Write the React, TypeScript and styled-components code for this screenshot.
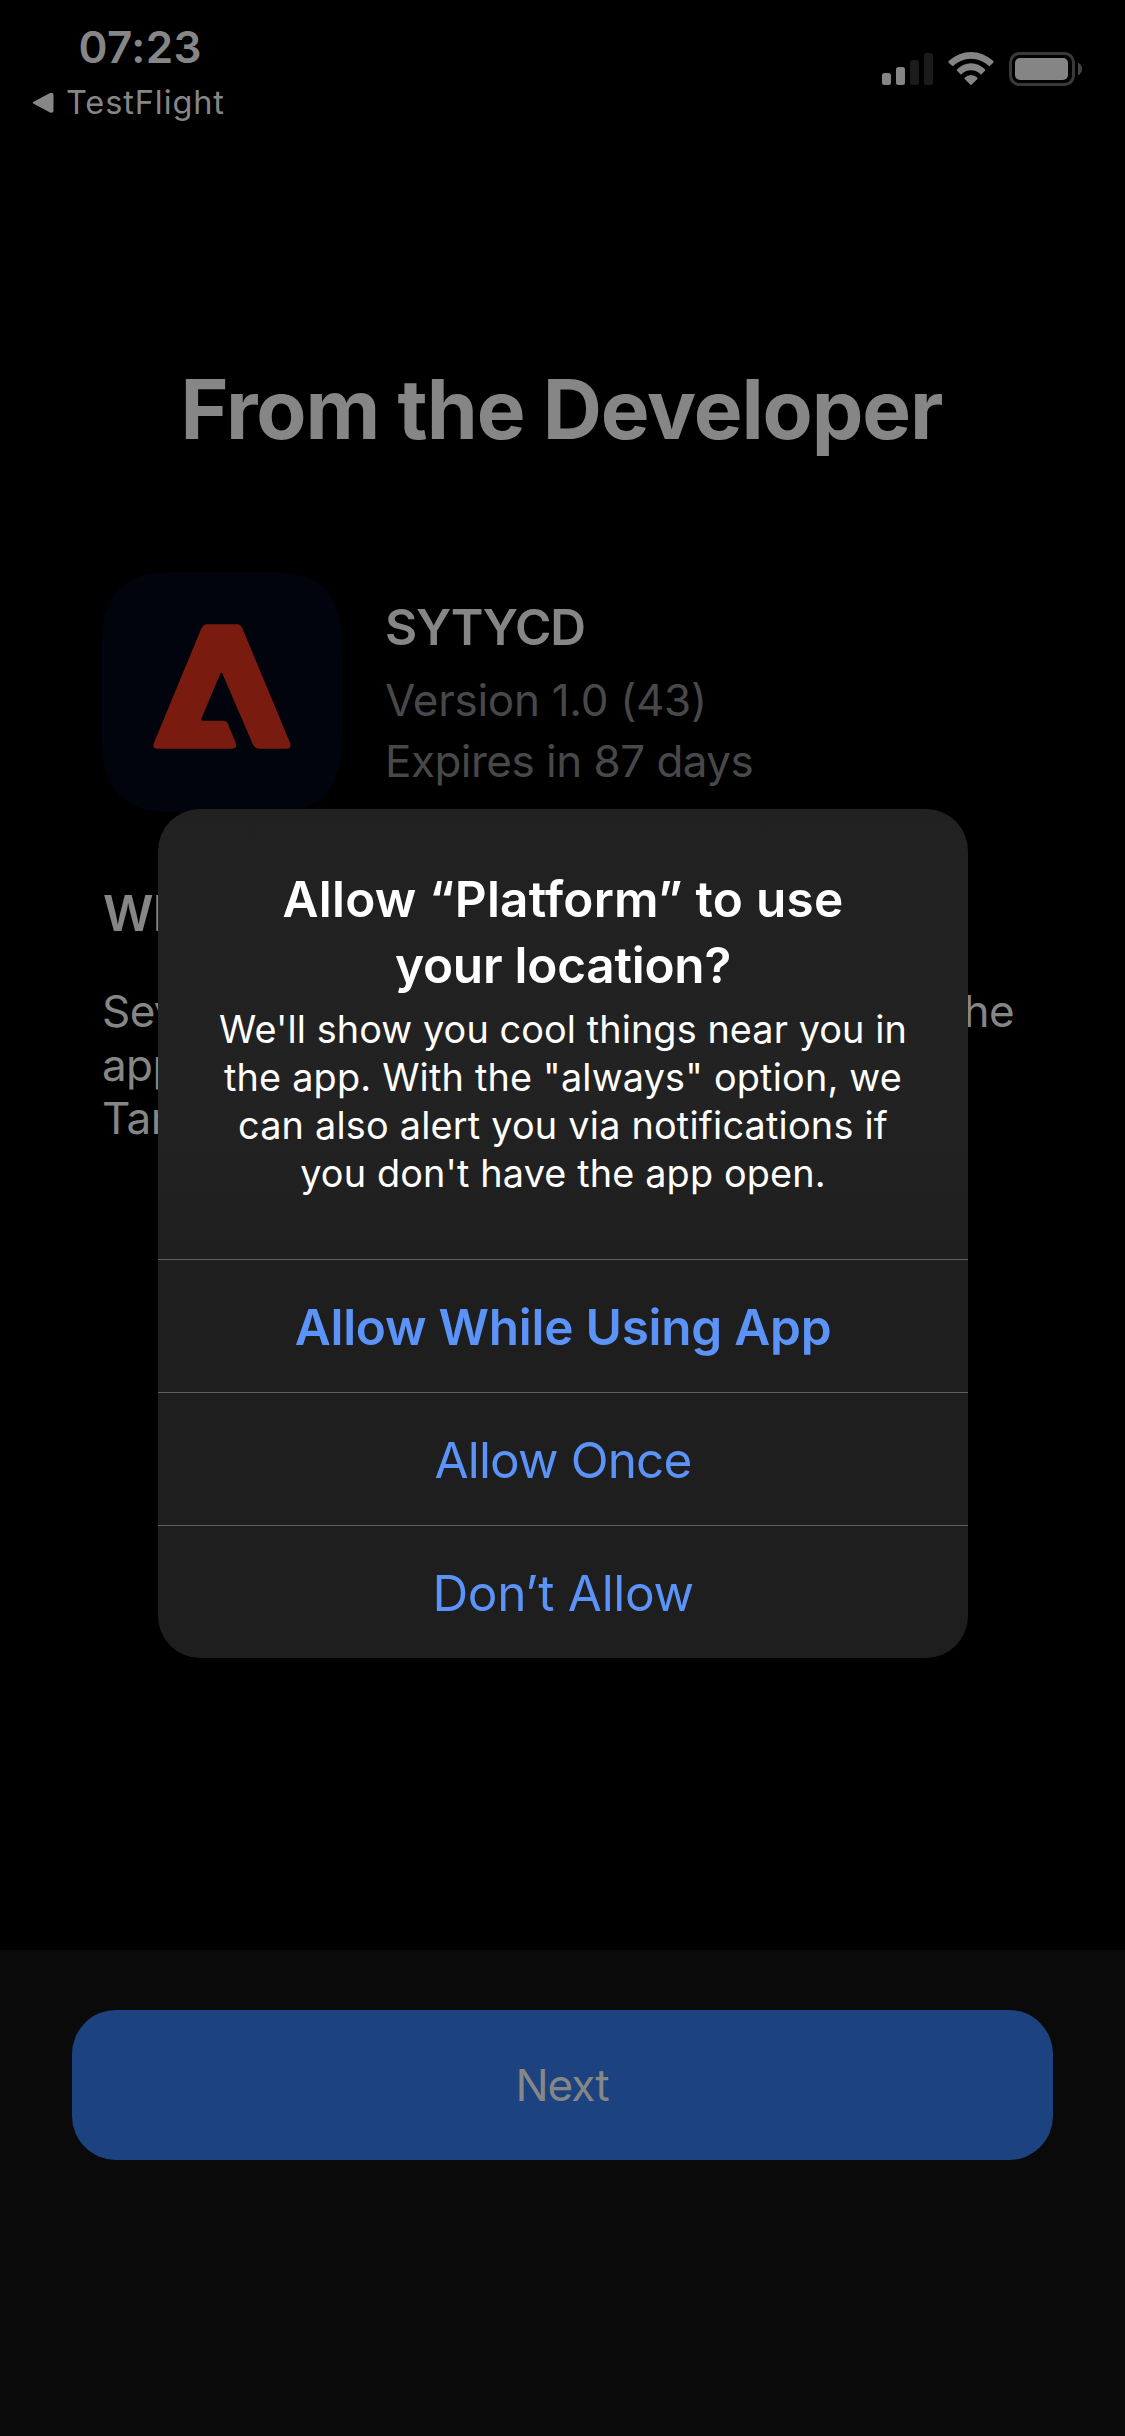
import React from "react";
import styled, { createGlobalStyle } from "styled-components";

const GlobalStyle = createGlobalStyle`
  * { box-sizing: border-box; }
  body { margin: 0; background: #000; }
`;

const Screen = styled.div`
  position: relative;
  display: flex;
  flex-direction: column;
  width: 1125px;
  height: 2436px;
  overflow: hidden;
  background: #000;
  color: #868686;
  font-family: Inter, "Liberation Sans", sans-serif;
  font-kerning: normal;
  white-space: nowrap;
`;

const StatusBar = styled.header`
  display: flex;
  justify-content: space-between;
  height: 362px;
  padding: 25px 43px 0 32px;
`;

const StatusLeft = styled.div`
  display: flex;
  flex-direction: column;
  gap: 18px;
`;

const Clock = styled.div`
  padding-left: 46.5px;
  font-size: 44px;
  line-height: 44px;
  font-weight: 600;
  letter-spacing: 0.4px;
`;

const BackLink = styled.div`
  display: flex;
  align-items: center;
  gap: 12px;
  font-size: 32.5px;
  line-height: 32px;
  letter-spacing: 0.9px;
`;

const StatusIcons = styled.div`
  display: flex;
  align-items: flex-start;
  padding-top: 27px;
`;

const Signal = styled.svg`
  width: 51px;
  height: 34px;
  margin-right: 15px;
`;

const Wifi = styled.svg`
  width: 46px;
  height: 34px;
  margin-right: 15px;
`;

const Battery = styled.svg`
  width: 73px;
  height: 34px;
`;

const PageTitle = styled.h1`
  margin: 0 0 114px;
  padding-right: 2px;
  text-align: center;
  font-size: 82px;
  line-height: 96px;
  font-weight: 700;
  letter-spacing: -1.1px;
`;

const AppRow = styled.section`
  display: flex;
  gap: 43px;
  height: 240px;
  padding-left: 102px;
`;

const AppIcon = styled.svg`
  width: 240px;
  height: 240px;
`;

const AppInfo = styled.div`
  display: flex;
  flex-direction: column;
  padding-top: 24.5px;
`;

const AppName = styled.h2`
  margin: 0 0 13.5px;
  font-size: 49.5px;
  line-height: 60px;
  font-weight: 600;
  letter-spacing: -1.19px;
`;

const AppMeta = styled.div<{ $track: number }>`
  font-size: 44px;
  line-height: 60.5px;
  letter-spacing: ${(p) => p.$track}px;
  color: #48484a;
`;

const Notes = styled.section`
  display: flex;
  flex-direction: column;
  padding: 71px 111px 0 102px;
`;

const NotesHeading = styled.h2`
  margin: 0 0 42px;
  padding-left: 1px;
  font-size: 49.5px;
  line-height: 60px;
  font-weight: 600;
  letter-spacing: -0.6px;
`;

const NotesLine = styled.div`
  display: flex;
  justify-content: space-between;
  font-size: 44px;
  line-height: 53.6px;
  letter-spacing: -0.6px;
`;

const Footer = styled.footer`
  display: flex;
  height: 486px;
  margin-top: auto;
  padding: 60px 72px;
  background: #0a0a0a;
`;

const NextButton = styled.button`
  flex: 1;
  height: 150px;
  padding: 0 1px 0 0;
  border: 0;
  border-radius: 44px;
  background: #1c427f;
  color: #868686;
  font: 400 44px/60px Inter, "Liberation Sans", sans-serif;
  letter-spacing: -1px;
`;

const Dialog = styled.div`
  position: absolute;
  top: 809px;
  left: 158px;
  display: flex;
  flex-direction: column;
  width: 810px;
  height: 849px;
  overflow: hidden;
  border-radius: 42px;
  background: linear-gradient(#212121 0%, #222222 35%, #1e1e1e 58%, #1e1e1e 100%);
`;

const DialogBody = styled.div`
  height: 450px;
  padding-top: 57px;
  text-align: center;
  color: #fff;
`;

const DialogTitle = styled.div<{ $track: number }>`
  font-size: 49.5px;
  line-height: 66px;
  font-weight: 600;
  letter-spacing: ${(p) => p.$track}px;
`;

const DialogMessage = styled.div`
  padding-top: 7px;
`;

const MessageLine = styled.div<{ $track: number }>`
  font-size: 37.8px;
  line-height: 48px;
  letter-spacing: ${(p) => p.$track}px;
`;

const DialogAction = styled.button<{ $strong?: boolean; $track: number }>`
  height: 133px;
  padding: 2px 0 0;
  border: 0;
  border-top: 1px solid #5f5f60;
  background: transparent;
  color: #5b93f9;
  font: ${(p) => (p.$strong ? 600 : 400)} 49.5px/60px Inter, "Liberation Sans", sans-serif;
  letter-spacing: ${(p) => p.$track}px;
`;

const SignalIcon = () => (
  <Signal viewBox="0 0 51 34" fill="#858585">
    <rect x="0" y="21" width="9" height="12" rx="2.5" />
    <rect x="14" y="15" width="9" height="18" rx="2.5" />
    <rect x="28" y="8" width="9" height="25" rx="2.5" fill="#1b1b1b" />
    <rect x="42" y="1" width="9" height="32" rx="2.5" fill="#1b1b1b" />
  </Signal>
);

const WifiIcon = () => (
  <Wifi viewBox="0 0 138 102" fill="#858585">
    <path d="M14 43 L2 32 Q0 29.500 2 27 Q33 0 69 0 Q105 0 136 27 Q138 29.500 136 32 L124 43 Q100 20 69 20 Q38 20 14 43Z" />
    <path d="M39 68 L27 56.500 Q25 54 27 52 Q46 34 69 34 Q92 34 111 52 Q113 54 111 56.500 L99 68 Q86 55 69 55 Q52 55 39 68Z" />
    <path d="M67.500 98 L50 81 Q48 79 50 77 Q58 69 69 69 Q80 69 88 77 Q90 79 88 81 L70.500 98 Q69 99.500 67.500 98Z" />
  </Wifi>
);

const BatteryIcon = () => (
  <Battery viewBox="0 0 73 34">
    <rect x="1.500" y="1.500" width="63" height="31" rx="9" fill="none" stroke="#393939" strokeWidth="3" />
    <rect x="6" y="6" width="53" height="22" rx="5" fill="#858585" />
    <path d="M69 10.700 Q73 12.500 73 17 Q73 21.500 69 23.300Z" fill="#444" />
  </Battery>
);

const AppLogo = () => (
  <AppIcon viewBox="0 0 720 720">
    <path
      fill="#01040c"
      d="M230 0 H490 C560 0 594 6 628 22 C664 40 690 68 704 106 C716 140 720 176 720 240 V480 C720 544 716 580 704 614 C690 652 664 680 628 698 C594 714 560 720 490 720 H230 C160 720 126 714 92 698 C56 680 30 652 16 614 C4 580 0 544 0 480 V240 C0 176 4 140 16 106 C30 68 56 40 92 22 C126 6 160 0 230 0Z"
    />
    <path
      fill="#7a1b0f"
      transform="translate(-36 -36)"
      d="M352 193 H441 Q452 193 457 205 L600 548 Q606 566 590 566 H507 Q494 566 488 552 L398 343 Q394 334 390 343 L334 476 Q333 482 339 482 H402 Q410 482 413 490 L437 548 Q443 566 428 566 H202 Q186 566 192 548 L333 208 Q340 193 352 193Z"
    />
  </AppIcon>
);

const BackArrow = () => (
  <svg width="22" height="22" viewBox="0 0 22 22" fill="#868686">
    <path d="M1.600 9.700 L18 1 Q21.500 0 21.500 3 V18.500 Q21.500 21.500 18 20.500 L1.600 11.800 Q-0.200 10.750 1.600 9.700Z" />
  </svg>
);

export default function App() {
  return (
    <Screen>
      <GlobalStyle />
      <StatusBar>
        <StatusLeft>
          <Clock>07:23</Clock>
          <BackLink>
            <BackArrow />
            <span>TestFlight</span>
          </BackLink>
        </StatusLeft>
        <StatusIcons>
          <SignalIcon />
          <WifiIcon />
          <BatteryIcon />
        </StatusIcons>
      </StatusBar>

      <PageTitle>From the Developer</PageTitle>

      <AppRow>
        <AppLogo />
        <AppInfo>
          <AppName>SYTYCD</AppName>
          <AppMeta $track={-0.28}>Version 1.0 (43)</AppMeta>
          <AppMeta $track={-0.52}>Expires in 87 days</AppMeta>
        </AppInfo>
      </AppRow>

      <Notes>
        <NotesHeading>Wh</NotesHeading>
        <NotesLine>
          <span>Sev</span>
          <span>he</span>
        </NotesLine>
        <NotesLine>app</NotesLine>
        <NotesLine>Tar</NotesLine>
      </Notes>

      <Footer>
        <NextButton>Next</NextButton>
      </Footer>

      <Dialog role="dialog">
        <DialogBody>
          <DialogTitle $track={0.25}>Allow “Platform” to use</DialogTitle>
          <DialogTitle $track={-0.23}>your location?</DialogTitle>
          <DialogMessage>
            <MessageLine $track={0.1}>We'll show you cool things near you in</MessageLine>
            <MessageLine $track={0.2}>the app. With the "always" option, we</MessageLine>
            <MessageLine $track={0.22}>can also alert you via notifications if</MessageLine>
            <MessageLine $track={0.15}>you don't have the app open.</MessageLine>
          </DialogMessage>
        </DialogBody>
        <DialogAction $strong $track={-0.25}>Allow While Using App</DialogAction>
        <DialogAction $track={-0.86}>Allow Once</DialogAction>
        <DialogAction $track={-0.33}>Don’t Allow</DialogAction>
      </Dialog>
    </Screen>
  );
}
